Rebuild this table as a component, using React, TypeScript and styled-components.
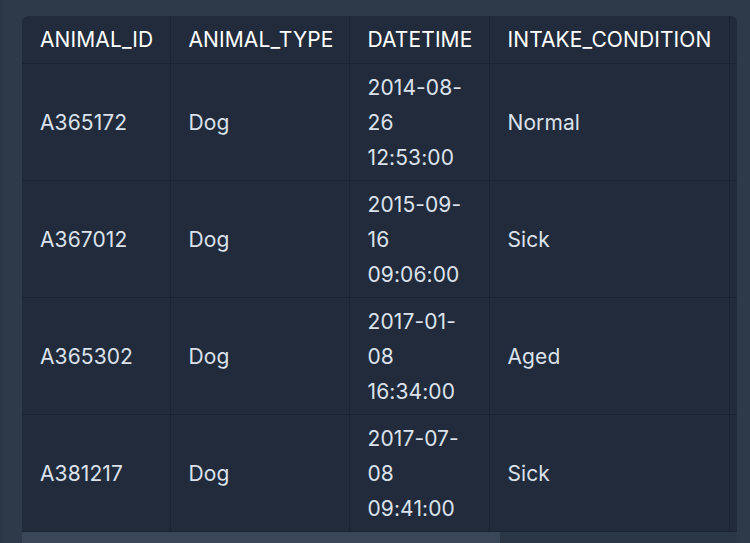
import React from "react";
import styled, { createGlobalStyle } from "styled-components";

const Global = createGlobalStyle`
  html, body { margin: 0; padding: 0; background: #2e3a4a; }
  body { font-family: Inter, "Noto Sans", sans-serif; -webkit-font-smoothing: antialiased; }
`;

const Page = styled.div`
  box-sizing: border-box;
  width: 750px;
  height: 543px;
  padding: 16px 13px 0 20px;
  border-left: 2px solid #2a3443;
  overflow: hidden;
`;

const Frame = styled.div`
  width: 715px;
  display: flex;
  flex-direction: column;
  background: #222b3b;
  border-radius: 6px 6px 0 0;
  overflow: hidden;
`;

const Viewport = styled.div`
  overflow: hidden;
`;

const Track = styled.div`
  height: 12px;
  background: #2b3647;
  display: flex;
`;

const Thumb = styled.div`
  height: 100%;
  background: #3a4759;
`;

const Table = styled.table`
  width: 1070px;
  table-layout: fixed;
  border-collapse: collapse;
  font-size: 21px;
  line-height: 35px;
  letter-spacing: 0.1px;
`;

const Th = styled.th<{ $w: number }>`
  width: ${(p) => p.$w}px;
  box-sizing: border-box;
  text-align: left;
  font-weight: 400;
  color: #ffffff;
  padding: 6px 18px 6px;
  border: 1px solid #1b2331;
  border-top: none;
  white-space: nowrap;
  &:first-child { border-left: none; }
`;

const Td = styled.td`
  color: #dbe2ec;
  padding: 6px 18px 5px;
  border: 1px solid #1b2331;
  vertical-align: middle;
  white-space: nowrap;
  &:first-child { border-left: none; }
`;

const cols: { name: string; w: number }[] = [
  { name: "ANIMAL_ID", w: 148 },
  { name: "ANIMAL_TYPE", w: 179 },
  { name: "DATETIME", w: 140 },
  { name: "INTAKE_CONDITION", w: 240 },
  { name: "", w: 363 },
];

const rows = [
  ["A365172", "Dog", ["2014-08-", "26", "12:53:00"], "Normal", ""],
  ["A367012", "Dog", ["2015-09-", "16", "09:06:00"], "Sick", ""],
  ["A365302", "Dog", ["2017-01-", "08", "16:34:00"], "Aged", ""],
  ["A381217", "Dog", ["2017-07-", "08", "09:41:00"], "Sick", ""],
] as const;

const VIEW_W = 715;
const CONTENT_W = 1070;

export default function App() {
  const thumbPct = (VIEW_W / CONTENT_W) * 100;
  return (
    <>
      <Global />
      <Page>
        <Frame>
          <Viewport>
            <Table>
              <thead>
                <tr>
                  {cols.map((c, i) => (
                    <Th key={i} $w={c.w}>
                      {c.name}
                    </Th>
                  ))}
                </tr>
              </thead>
              <tbody>
                {rows.map((r) => (
                  <tr key={r[0]}>
                    {r.map((cell, i) => (
                      <Td key={i}>
                        {Array.isArray(cell)
                          ? (cell as readonly string[]).map((l, j) => (
                              <React.Fragment key={j}>
                                {j > 0 && <br />}
                                {l}
                              </React.Fragment>
                            ))
                          : cell}
                      </Td>
                    ))}
                  </tr>
                ))}
              </tbody>
            </Table>
          </Viewport>
          <Track>
            <Thumb style={{ width: `${thumbPct}%` }} />
          </Track>
        </Frame>
      </Page>
    </>
  );
}
